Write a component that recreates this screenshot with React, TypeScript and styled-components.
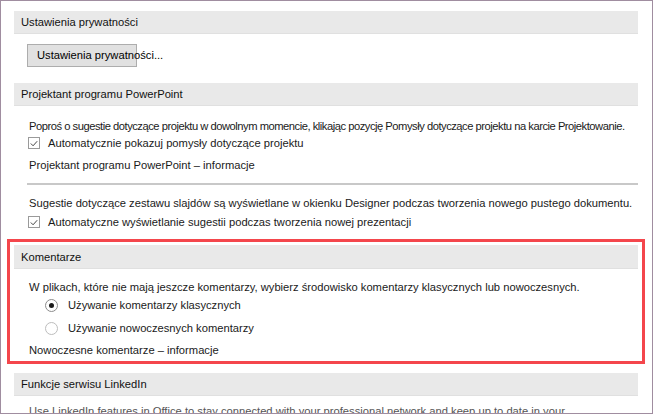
import React from 'react'
import { createGlobalStyle, styled } from 'styled-components'

const Global = createGlobalStyle`
  html, body {
    margin: 0;
    padding: 0;
    background: #ffffff;
  }
  body {
    font-family: "Liberation Sans", Arial, sans-serif;
    font-size: 11.2px;
    color: #1a1a1a;
  }
`

const Check = ({ checked }: { checked?: boolean }) => (
    <CheckBox>
        {checked && (
            <svg viewBox="0 0 11 11" width="11" height="11">
                <path d="M2 5.5 L4.5 8 L9 3" fill="none" stroke="#333" strokeWidth="1" />
            </svg>
        )}
    </CheckBox>
)

const App = () => {
    return (
        <>
            <Global />
            <Window>
                <Header>Ustawienia prywatności</Header>
                <Body>
                    <Button>Ustawienia prywatności...</Button>
                </Body>

                <Header $top={16}>Projektant programu PowerPoint</Header>
                <Body>
                    <Line $top={12} $tight>
                        Poproś o sugestie dotyczące projektu w dowolnym momencie, klikając pozycję Pomysły dotyczące projektu na karcie Projektowanie.
                    </Line>
                    <Option $top={1}>
                        <Check checked />
                        <span>Automatycznie pokazuj pomysły dotyczące projektu</span>
                    </Option>
                    <Line $top={6}>Projektant programu PowerPoint – informacje</Line>
                    <Separator />
                    <Line $top={10}>
                        Sugestie dotyczące zestawu slajdów są wyświetlane w okienku Designer podczas tworzenia nowego pustego dokumentu.
                    </Line>
                    <Option $top={3}>
                        <Check checked />
                        <span>Automatyczne wyświetlanie sugestii podczas tworzenia nowej prezentacji</span>
                    </Option>
                </Body>

                <Highlight>
                    <Header $top={0} $tall>Komentarze</Header>
                    <Body>
                        <Line $top={10}>
                            W plikach, które nie mają jeszcze komentarzy, wybierz środowisko komentarzy klasycznych lub nowoczesnych.
                        </Line>
                        <Option $top={2} $radio>
                            <Radio $checked />
                            <span>Używanie komentarzy klasycznych</span>
                        </Option>
                        <Option $top={7} $radio>
                            <Radio />
                            <span>Używanie nowoczesnych komentarzy</span>
                        </Option>
                        <Line $top={6}>Nowoczesne komentarze – informacje</Line>
                    </Body>
                </Highlight>

                <Header $top={9}>Funkcje serwisu LinkedIn</Header>
                <Body>
                    <Line $top={7} $muted>
                        Use LinkedIn features in Office to stay connected with your professional network and keep up to date in your
                    </Line>
                </Body>
            </Window>
        </>
    )
}

const Window = styled.div`
    box-sizing: border-box;
    width: 653px;
    height: 414px;
    border: 1px solid #a08da0;
    padding: 10px 14px 0 13px;
    overflow: hidden;
    display: flex;
    flex-direction: column;
`

const Header = styled.div<{ $top?: number; $tall?: boolean }>`
    flex-shrink: 0;
    margin-top: ${p => p.$top ?? 0}px;
    height: ${p => (p.$tall ? 24 : 23)}px;
    line-height: ${p => (p.$tall ? 24 : 23)}px;
    padding-left: 7px;
    background: #e9e9e9;
    border-bottom: 1px solid #e0e0e0;
    box-sizing: border-box;
    color: #111;
    white-space: nowrap;
`

const Body = styled.div`
    display: flex;
    flex-direction: column;
    padding-left: 15px;
`

const Button = styled.div`
    box-sizing: border-box;
    margin: 10px 0 0 -2px;
    width: 110px;
    height: 23px;
    line-height: 21px;
    padding-left: 9px;
    background: #e1e1e1;
    border: 1px solid #adadad;
    white-space: nowrap;
    color: #000;
`

const Line = styled.div<{ $top?: number; $muted?: boolean; $tight?: boolean }>`
    margin-top: ${p => p.$top ?? 0}px;
    height: 16px;
    line-height: 16px;
    white-space: nowrap;
    letter-spacing: ${p => (p.$tight ? '-0.48px' : 'normal')};
    color: ${p => (p.$muted ? '#555' : '#1a1a1a')};
`

const Option = styled.label<{ $top?: number; $radio?: boolean }>`
    display: flex;
    align-items: center;
    gap: ${p => (p.$radio ? 10 : 8)}px;
    margin-top: ${p => p.$top ?? 0}px;
    margin-left: ${p => (p.$radio ? 16 : -1)}px;
    height: 16px;
    white-space: nowrap;
`

const CheckBox = styled.span`
    box-sizing: border-box;
    width: 12px;
    height: 12px;
    border: 1px solid #9a9a9a;
    background: #fff;
    display: flex;
    align-items: center;
    justify-content: center;
`

const Radio = styled.span<{ $checked?: boolean }>`
    box-sizing: border-box;
    width: 13px;
    height: 13px;
    border-radius: 50%;
    border: 1px solid ${p => (p.$checked ? '#8c8c8c' : '#bdbdbd')};
    background: #fff;
    display: flex;
    align-items: center;
    justify-content: center;

    &::after {
        content: '';
        display: ${p => (p.$checked ? 'block' : 'none')};
        width: 5px;
        height: 5px;
        border-radius: 50%;
        background: #1a1a1a;
    }
`

const Separator = styled.div`
    margin: 10px 0 0 -2px;
    height: 2px;
    background: #c8c8c8;
`

const Highlight = styled.section`
    margin: 9px -7px 0 -7px;
    padding: 3px 4px 3px 4px;
    border: 3px solid #f4464c;
    display: flex;
    flex-direction: column;
`

export default App
